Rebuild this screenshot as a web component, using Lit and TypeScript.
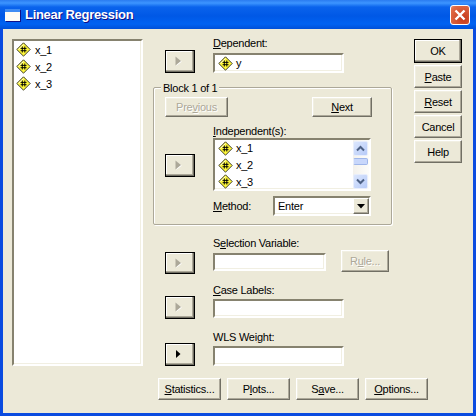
import { LitElement, html, css, svg } from "lit";
import { customElement } from "lit/decorators.js";

const varIcon = () => html`<svg class="vi" width="15" height="15" viewBox="0 0 15 15">
  <path d="M7.5 .8L14.2 7.5L7.5 14.2L.8 7.5Z" fill="#fff83a" stroke="#2a2a20" stroke-width=".9"/>
  <path d="M7.5 2.4L2.4 7.5" stroke="#fffde0" stroke-width="1" fill="none"/>
  <path d="M6.3 4.5V10.5M8.8 4.5V10.5M4.6 6.4H10.5M4.6 8.7H10.5" stroke="#000" stroke-width=".95" fill="none"/>
</svg>`;

const arrow = (on = false) => html`<svg width="7" height="10" viewBox="0 0 7 10">
  ${on
    ? svg`<path d="M1 1L5.5 5L1 9Z" fill="#000"/>`
    : svg`<path d="M1 1L6.5 5.5L1 9.5Z" fill="#fff" transform="translate(.3 .3)"/><path d="M.5 .5L6 5L.5 9.5Z" fill="#aca899"/>`}
</svg>`;

@customElement("app-root")
export class AppRoot extends LitElement {
  static styles = css`
    :host { display: block; width: 476px; height: 416px; overflow: hidden; }
    * { box-sizing: border-box; }
    .window {
      width: 476px; height: 416px; display: flex; flex-direction: column;
      font: 11px/14px "Liberation Sans", Arial, sans-serif; letter-spacing: -0.25px; color: #000;
      background: #0831d9;
    }
    .title {
      height: 29px; display: flex; align-items: center; padding: 0 6px 0 5px;
      background: linear-gradient(#2a7bf0 0, #3d95ff 3px, #0a63ec 7px, #0058e6 16px, #0062f2 24px, #0050d8 29px);
      color: #fff; font: bold 13px/18px "Liberation Sans", sans-serif; letter-spacing: -0.3px;
      text-shadow: 1px 1px 0 #0f1089;
    }
    .title span { margin-left: 5px; }
    .sysicon { width: 15px; height: 12px; background: #fdfcf6; border-top: 3px solid #3f8cf3; box-shadow: 1px 1px 0 #0f1089; }
    .close {
      margin-left: auto; width: 20px; height: 20px; border: 1px solid #fff; border-radius: 3px;
      background: radial-gradient(circle at 70% 70%, #c5391a, #e06a44 80%, #ec8f70);
      display: flex; align-items: center; justify-content: center;
    }
    .frame { flex: 1; display: flex; padding: 0 3px 3px 3px; background: #0a4be0; min-height: 0; }
    .client { flex: 1; background: #ece9d8; display: flex; padding: 7px 0 0 9px; }

    .sunken {
      background: #fff; border: 2px solid; border-color: #86826f #fff #fff #86826f;
      box-shadow: inset -1px -1px 0 #f1efe2;
    }
    .varlist { width: 131px; height: 327px; margin-top: 3px; padding: 0 0 0 2px; }
    .vrow { display: flex; align-items: center; height: 17px; gap: 4px; }
    .vi { flex: none; }

    .right { margin-left: 10px; display: flex; flex-direction: column; }
    .top { display: flex; align-items: flex-start; }
    .center { width: 239px; display: flex; flex-direction: column; }
    .actions { margin: 3px 0 0 22px; display: flex; flex-direction: column; gap: 2px; }

    button {
      font: inherit; letter-spacing: inherit; color: #000; padding: 0; margin: 0; background: #ece9d8;
      border: 1px solid; border-color: #fff #716f64 #716f64 #fff;
      box-shadow: inset -1px -1px 0 #aca899, inset 1px 1px 0 #f1efe2;
      display: block; text-align: center;
    }
    button:disabled { color: #aca899; text-shadow: 1px 1px 0 #fff; }
    .act { width: 48px; height: 23px; }
    .act.def { border-color: #000; height: 24px; box-shadow: inset -1px -1px 0 #716f64, inset -2px -2px 0 #aca899, inset 1px 1px 0 #fff; }
    .go {
      flex: none; width: 30px; height: 23px; border-color: #000;
      box-shadow: inset -1px -1px 0 #716f64, inset -2px -2px 0 #aca899, inset 1px 1px 0 #fff;
      display: flex; align-items: center; justify-content: center; padding: 0 3px 1px 0;
    }
    .go.r22 { height: 22px; }

    .row { display: flex; padding-left: 12px; }
    .field { margin-left: 18px; display: flex; flex-direction: column; }
    .lbl { height: 14px; white-space: nowrap; }
    .box { display: flex; align-items: center; }
    .w131 { width: 131px; }
    .w113 { width: 113px; }

    .r-dep .go { margin-top: 14px; }
    .r-dep .box { height: 20px; margin-top: 3px; padding-left: 3px; gap: 3px; }

    .group {
      position: relative; margin-top: 14px; height: 138px;
      border: 1px solid #aca899; box-shadow: inset 1px 1px 0 #fff, 1px 1px 0 #fff;
      border-radius: 2px; padding: 9px 19px 0 11px;
    }
    .legend { position: absolute; left: 7px; top: -7px; background: #ece9d8; padding: 0 2px; }
    .navrow { display: flex; justify-content: space-between; }
    .nav-prev { width: 63px; height: 20px; }
    .nav-next { width: 60px; height: 20px; }
    .ind { display: flex; margin-top: 7px; }
    .ind .go { margin-top: 30px; }
    .ind-col { margin-left: 18px; display: flex; flex-direction: column; }
    .ind-list { width: 158px; height: 53px; display: flex; overflow: hidden; }
    .ind-items { flex: 1; padding: 0 0 0 3px; }
    .ind-items .vrow { height: 16.7px; gap: 3px; }
    .scroll { width: 16px; display: flex; flex-direction: column; background: linear-gradient(90deg, #f3f1ec, #fdfdfa); padding-top: 1px; }
    .sbtn {
      height: 15px; width: 15px; flex: none; border: 1px solid #e8eefc; border-radius: 2px;
      background: linear-gradient(135deg, #dbe6fd, #b7cbf8);
      display: flex; align-items: center; justify-content: center;
    }
    .thumb { height: 7px; width: 15px; margin-top: 2px; border: 1px solid #9fb6ea; border-left-color: #e8eefc; border-radius: 2px; background: #c8d7fb; }
    .sfill { flex: 1; }
    .method { display: flex; align-items: center; margin-top: 5px; }
    .method .lbl { width: 60px; }
    .select { width: 98px; height: 20px; display: flex; align-items: center; padding-left: 3px; }
    .select .txt { flex: 1; }
    .ddbtn {
      width: 16px; height: 16px; background: #ece9d8; flex: none; border: 1px solid; border-color: #fff #716f64 #716f64 #fff;
      box-shadow: inset -1px -1px 0 #aca899; display: flex; align-items: center; justify-content: center;
    }

    .r-sel { margin-top: 11px; }
    .r-sel .go { margin-top: 16px; }
    .r-sel .box { height: 18px; margin-top: 3px; }
    .rule { width: 48px; height: 22px; margin: 14px 0 0 15px; }
    .r-case { margin-top: 9px; }
    .r-case .go { margin-top: 13px; }
    .r-case .box { height: 19px; margin-top: 2px; }
    .r-wls { margin-top: 11px; }
    .r-wls .go { margin-top: 13px; }
    .r-wls .box { height: 20px; margin-top: 2px; }

    .bottom { display: flex; gap: 6px; margin: 12px 0 0 5px; }
    .bottom button { width: 63px; height: 22px; }
    u { text-underline-offset: 1px; }
  `;

  render() {
    const vars = ["x_1", "x_2", "x_3"];
    return html`<div class="window">
      <div class="title">
        <div class="sysicon"></div>
        <span>Linear Regression</span>
        <div class="close">
          <svg width="12" height="12" viewBox="0 0 12 12"><path d="M1.5 1.5L10.5 10.5M10.5 1.5L1.5 10.5" stroke="#fff" stroke-width="2.4" fill="none"/></svg>
        </div>
      </div>
      <div class="frame">
        <div class="client">
          <div class="sunken varlist">
            ${vars.map((v) => html`<div class="vrow">${varIcon()}<span>${v}</span></div>`)}
          </div>
          <div class="right">
            <div class="top">
              <div class="center">
                <div class="row r-dep">
                  <button class="go" disabled>${arrow()}</button>
                  <div class="field">
                    <div class="lbl"><u>D</u>ependent:</div>
                    <div class="sunken box w131">${varIcon()}<span>y</span></div>
                  </div>
                </div>
                <div class="group">
                  <div class="legend">Block 1 of 1</div>
                  <div class="navrow">
                    <button class="nav-prev" disabled>Pre<u>v</u>ious</button>
                    <button class="nav-next"><u>N</u>ext</button>
                  </div>
                  <div class="ind">
                    <button class="go" disabled>${arrow()}</button>
                    <div class="ind-col">
                      <div class="lbl"><u>I</u>ndependent(s):</div>
                      <div class="sunken ind-list">
                        <div class="ind-items">
                          ${vars.map((v) => html`<div class="vrow">${varIcon()}<span>${v}</span></div>`)}
                        </div>
                        <div class="scroll">
                          <div class="sbtn"><svg width="9" height="7" viewBox="0 0 9 7"><path d="M1 5.5L4.5 2L8 5.5" stroke="#4d6185" stroke-width="2" fill="none"/></svg></div>
                          <div class="thumb"></div>
                          <div class="sfill"></div>
                          <div class="sbtn"><svg width="9" height="7" viewBox="0 0 9 7"><path d="M1 1.5L4.5 5L8 1.5" stroke="#4d6185" stroke-width="2" fill="none"/></svg></div>
                        </div>
                      </div>
                      <div class="method">
                        <div class="lbl"><u>M</u>ethod:</div>
                        <div class="sunken select">
                          <span class="txt">Enter</span>
                          <div class="ddbtn"><svg width="9" height="5" viewBox="0 0 9 5"><path d="M0 0H8L4 4.5Z" fill="#000"/></svg></div>
                        </div>
                      </div>
                    </div>
                  </div>
                </div>
                <div class="row r-sel">
                  <button class="go r22" disabled>${arrow()}</button>
                  <div class="field">
                    <div class="lbl">S<u>e</u>lection Variable:</div>
                    <div class="sunken box w113"></div>
                  </div>
                  <button class="rule" disabled>R<u>u</u>le...</button>
                </div>
                <div class="row r-case">
                  <button class="go" disabled>${arrow()}</button>
                  <div class="field">
                    <div class="lbl"><u>C</u>ase Labels:</div>
                    <div class="sunken box w131"></div>
                  </div>
                </div>
                <div class="row r-wls">
                  <button class="go">${arrow(true)}</button>
                  <div class="field">
                    <div class="lbl">WLS Wei<u>g</u>ht:</div>
                    <div class="sunken box w131"></div>
                  </div>
                </div>
              </div>
              <div class="actions">
                <button class="act def">OK</button>
                <button class="act"><u>P</u>aste</button>
                <button class="act"><u>R</u>eset</button>
                <button class="act">Cancel</button>
                <button class="act">Help</button>
              </div>
            </div>
            <div class="bottom">
              <button><u>S</u>tatistics...</button>
              <button>P<u>l</u>ots...</button>
              <button>S<u>a</u>ve...</button>
              <button><u>O</u>ptions...</button>
            </div>
          </div>
        </div>
      </div>
    </div>`;
  }
}
